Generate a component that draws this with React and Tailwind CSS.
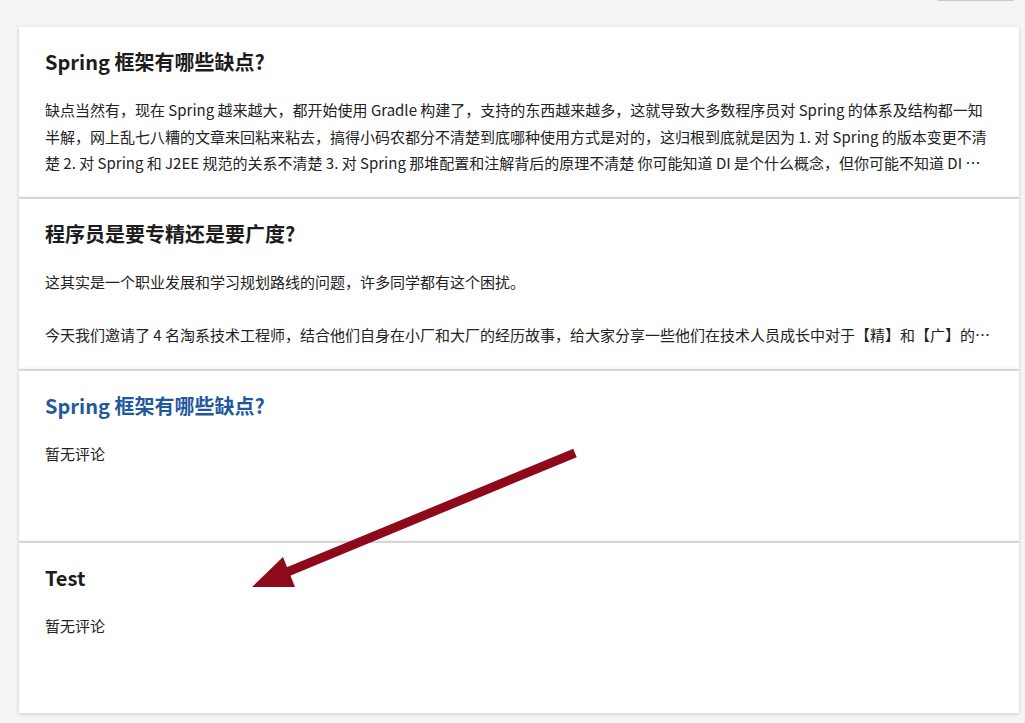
import React from "react";

const font = { fontFamily: '"Noto Sans CJK SC", "Noto Sans", sans-serif' };

function Card({ title, titleClass = "text-[#1c1c1c]", children, first }) {
  return (
    <div
      className={
        "bg-white px-[26px] pt-[21px] shadow-[0_1px_4px_rgba(0,0,0,0.18)] overflow-hidden " +
        (first ? "h-[170px]" : "h-[172px] border-t-2 border-[#d6d6d6]")
      }
    >
      <h2 className={"text-[20px] leading-[28px] font-bold " + titleClass}>{title}</h2>
      <div className="mt-[21px] text-[15px] leading-[26.5px] text-[#222]">{children}</div>
    </div>
  );
}

export default function App() {
  return (
    <div className="relative min-h-screen bg-[#f5f5f5]" style={font}>
      <div className="flex justify-end pr-[9px] h-[27px] overflow-hidden">
        <div className="w-[81px] h-[30px] -mt-[29px] rounded border border-[#c8c8d0] bg-white" />
      </div>
      <div className="ml-[19px] w-[1000px] flex flex-col">
        <Card first title="Spring 框架有哪些缺点?">
          <p className="line-clamp-3">
            缺点当然有，现在 Spring 越来越大，都开始使用 Gradle 构建了，支持的东西越来越多，这就导致大多数程序员对 Spring 的体系及结构都一知半解，网上乱七八糟的文章来回粘来粘去，搞得小码农都分不清楚到底哪种使用方式是对的，这归根到底就是因为 1. 对 Spring 的版本变更不清楚 2. 对 Spring 和 J2EE 规范的关系不清楚 3. 对 Spring 那堆配置和注解背后的原理不清楚 你可能知道 DI 是个什么概念，但你可能不知道 DI 背后的原理是什么，也不知道 AOP 到底是怎么实现的。
          </p>
        </Card>
        <Card title="程序员是要专精还是要广度?">
          <p className="line-clamp-3 whitespace-pre-line">
            {"这其实是一个职业发展和学习规划路线的问题，许多同学都有这个困扰。\n\n今天我们邀请了 4 名淘系技术工程师，结合他们自身在小厂和大厂的经历故事，给大家分享一些他们在技术人员成长中对于【精】和【广】的看法和思考。"}
          </p>
        </Card>
        <Card title="Spring 框架有哪些缺点?" titleClass="text-[#1f5a9e]">
          <p>暂无评论</p>
        </Card>
        <Card title="Test">
          <p>暂无评论</p>
        </Card>
      </div>
      <svg
        className="absolute left-0 top-0 pointer-events-none"
        width="1025"
        height="723"
        viewBox="0 0 1025 723"
      >
        <line x1="575" y1="453" x2="280" y2="575" stroke="#8e0a1b" strokeWidth="9" />
        <polygon points="252,587 283,557 295,587" fill="#8e0a1b" />
      </svg>
    </div>
  );
}
